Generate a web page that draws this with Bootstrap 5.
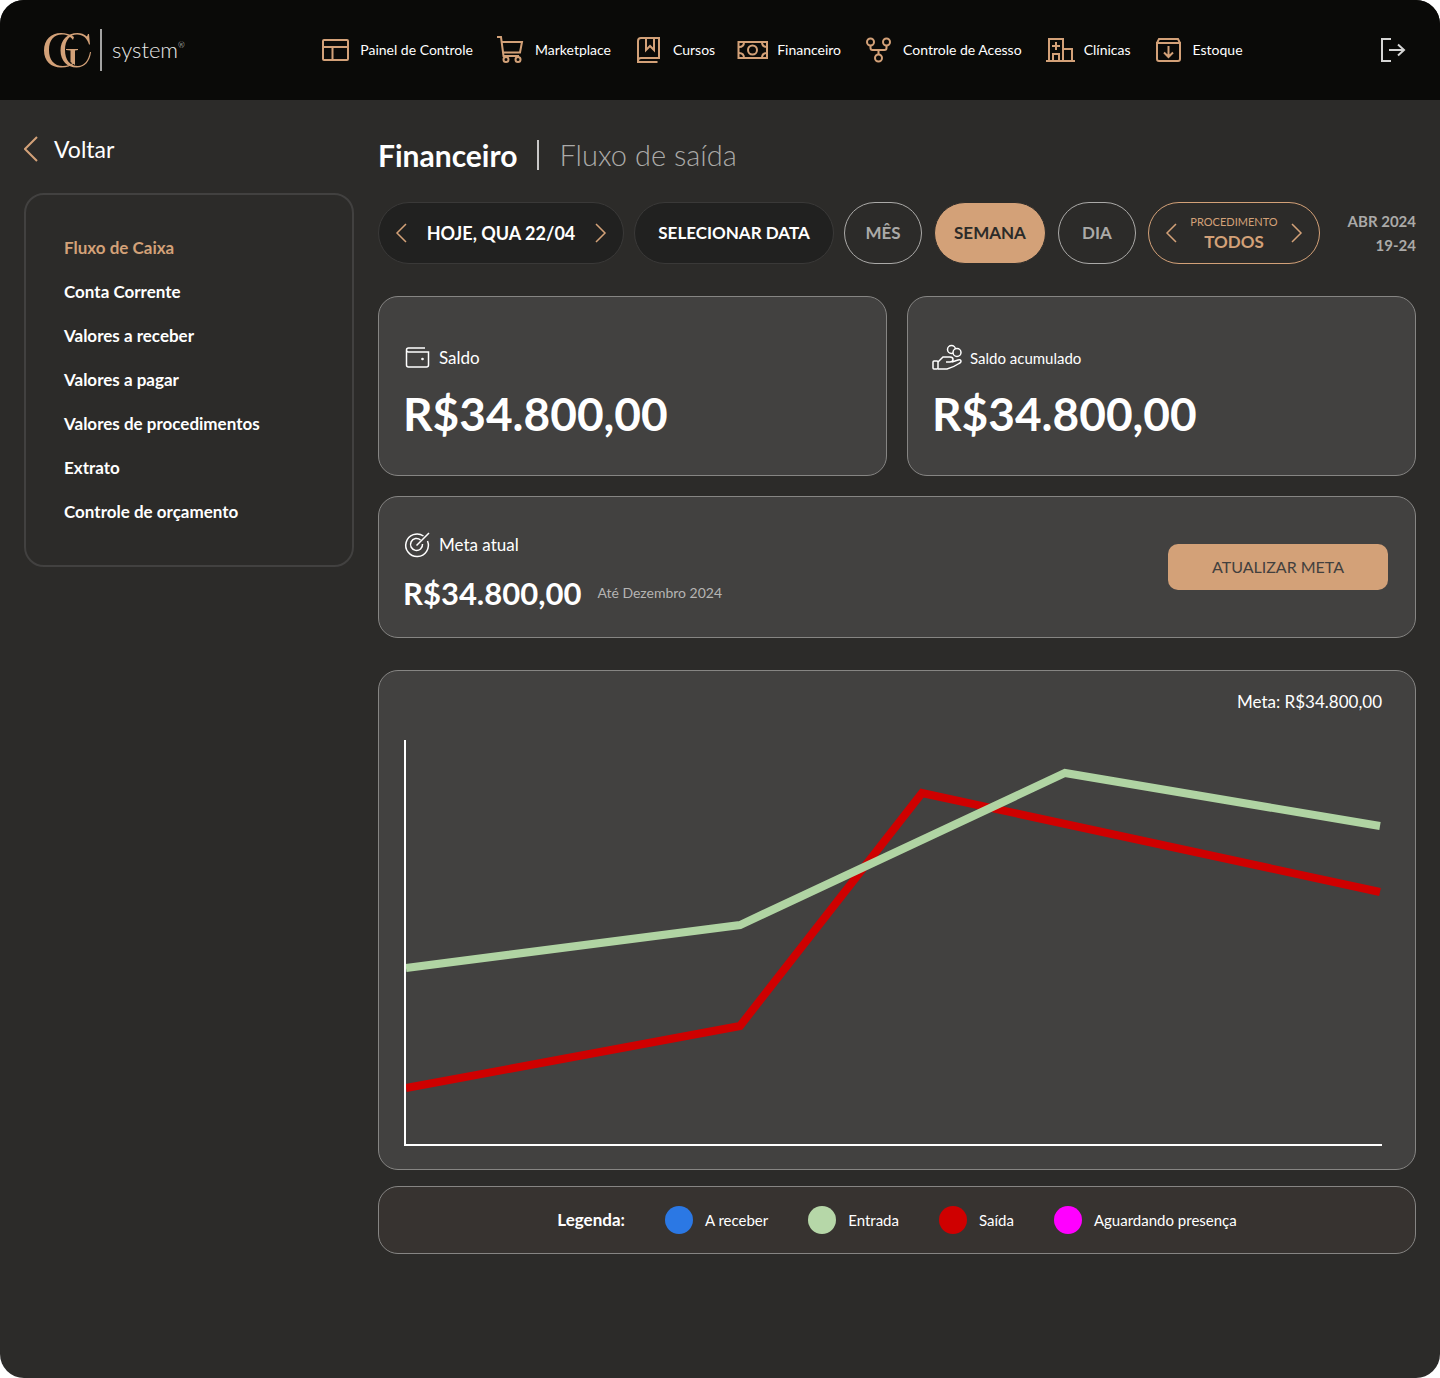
<!DOCTYPE html>
<html lang="pt-BR">
<head>
<meta charset="utf-8">
<meta name="viewport" content="width=device-width, initial-scale=1">
<title>GC system – Fluxo de saída</title>
<link href="https://cdn.jsdelivr.net/npm/bootstrap@5.3.0/dist/css/bootstrap.min.css" rel="stylesheet">
<style>
:root{--gold:#d3a178;--ink:#2c2b29;--panel:#424140;--line:#868583;--muted:#abaaa8}
body{font-family:Lato,"Liberation Sans",sans-serif;background:#fff;color:#fff;line-height:24px}
a{text-decoration:none;color:inherit}
svg{display:block;flex:none}
.app-shell{background:var(--ink);border-radius:24px;overflow:hidden;min-height:100vh}
.top-bar{background:#0a0a08;min-height:100px;padding:0 34px 0 42px}
.brand-name{font-size:22px;font-weight:300;color:#e8e8e7}
.brand-name sup{font-size:8px;top:-10px}
.brand-rule{width:2px;height:42px;background:#a3a3a2;margin:0 10px 0 8px}
.main-nav{gap:4px 22px;font-size:14px}
.gold{color:var(--gold)}
.ico{fill:none;stroke:currentColor;stroke-width:2}
.ico-thin{stroke-width:1.5}
.exit-link{color:#d5d5d4}
.page-body{padding:24px;gap:24px}
.side-col{flex:0 0 330px}
.back-link{font-size:23px;line-height:50px;gap:16px}
.side-menu{border:2px solid var(--panel);border-radius:20px;padding:31px 38px;margin-top:19px}
.side-menu a{display:block;font-size:17px;font-weight:700;line-height:44px}
.side-menu a.active{color:var(--gold)}
.content-col{flex:1 1 0;min-width:0}
.page-title{font-size:30px;line-height:62px;gap:20px}
.page-title h1{font-size:inherit;line-height:inherit;font-weight:700;margin:0}
.page-title .rule{width:2px;height:30px;background:#c9c8c7}
.page-title .sub{font-size:29px;font-weight:300;color:var(--muted)}
.filters{gap:12px;margin-top:16px}
.filters-main{gap:10px}
.pill{height:62px;border-radius:31px;border:1px solid var(--muted);background:transparent;color:var(--muted);font-size:17px;font-weight:700;padding:0 20px}
.pill-dark{background:#212120;border-color:#3a3938;color:#fff}
.pill-on{background:var(--gold);border-color:var(--ink);color:var(--ink)}
.pill-gold{border-color:var(--gold);color:var(--gold)}
.w-date{width:246px;font-size:18px}.w-pick{width:200px}.w-short{width:78px}.w-week{width:112px}.w-proc{width:172px}
.step{background:none;border:0;padding:0;color:var(--gold)}
.proc-label{font-size:11px;line-height:18px;font-weight:400}
.proc-value{line-height:22px}
.period{font-size:15px;font-weight:700;color:var(--muted)}
.panel{background:var(--panel);border:1px solid var(--line);border-radius:20px}
.saldo{min-height:180px;padding:47px 24px 24px}
.saldo-grid{gap:20px;margin-top:32px}
.label-lg{font-size:17px}
.label-md{font-size:15px}
.amount{font-size:46px;line-height:56px;font-weight:700;margin-top:14px}
.goal{margin-top:20px;min-height:142px;padding:0 27px 0 24px}
.goal-info{padding-top:10px}
.goal-row{margin-top:14px}
.goal-amount{font-size:31px;line-height:40px;font-weight:700}
.goal-date{font-size:14px;color:#b5b4b3}
.btn-goal{width:220px;height:46px;border:0;border-radius:10px;background:var(--gold);color:#42403e;font-size:16px}
.chart-box{margin-top:32px;padding:19px 33px 23px 25px}
.chart-box svg{width:100%;height:auto;margin-top:26px}
.legend-bar{margin-top:16px;min-height:68px;background:#373330;gap:8px 40px;font-size:15px}
.legend-item{gap:12px}
.dot{width:28px;height:28px;border-radius:50%}
.c-blue{background:#2b78e4}.c-green{background:#b6d7a8}.c-red{background:#cf0000}.c-pink{background:#f0f}
</style>
</head>
<body>
<div class="app-shell">
<header class="top-bar d-flex align-items-center justify-content-between">
  <a href="#" class="d-flex align-items-center" aria-label="GC system">
    <svg width="50" height="42" viewBox="0 0 50 42" fill="#d3a178">
      <path d="M32 8C28 5 24 4 19 4C9 4 2 11 2 21.500C2 32 9 38.500 19 38.500C25 38.500 29 37 32 34.500L31.500 33.500C28 36 25 37 21 37C12 37 7 31 7 21C7 11 12 5.500 20 5.500C25 5.500 28 7 31 11Z"/>
      <path d="M46 5L45 7.500C42 5 39 4 35.500 4C25.500 4 18.500 11 18.500 21.500C18.500 32 25.500 38.500 34.500 38.500C43 38.500 48 32 49 23H48C46.500 31.500 42 37 36 37C28 37 23 31 23 21C23 11 28 5.500 35 5.500C41 5.500 45 9 47 15.500H48L47 5Z"/>
      <path d="M24 20H36V21L33 21.500V36L28.500 33V21.500L24 21Z"/>
    </svg>
    <span class="brand-rule"></span>
    <span class="brand-name">system<sup>®</sup></span>
  </a>
  <nav class="main-nav d-flex flex-wrap justify-content-center" aria-label="Principal">
    <a href="#" class="d-flex align-items-center gap-2"><svg class="ico gold" width="32" height="32" viewBox="0 0 32 32"><rect x="3" y="6" width="25" height="20" rx="1"/><path d="M3 13h25M12.500 13v13"/></svg>Painel de Controle</a>
    <a href="#" class="d-flex align-items-center gap-2"><svg class="ico gold" width="32" height="32" viewBox="0 0 32 32"><path d="M2 3h4l2.500 19H24M7 8h20l-2 10.500H8.500"/><circle cx="11" cy="25.500" r="2.500"/><circle cx="23" cy="25.500" r="2.500"/></svg>Marketplace</a>
    <a href="#" class="d-flex align-items-center gap-2"><svg class="ico gold" width="32" height="32" viewBox="0 0 32 32"><path d="M24.500 28H5V7q0-3 3-3h18v20H8q-3 0-3 3M13 4v12l4-4 4 4V4"/></svg>Cursos</a>
    <a href="#" class="d-flex align-items-center gap-2"><svg class="ico gold" width="32" height="32" viewBox="0 0 32 32"><rect x="1.500" y="8" width="28.500" height="16"/><circle cx="15.500" cy="16" r="4.500"/><path d="M2 13q5 0 5-5M2 19q5 0 5 5M30 13q-5 0-5-5M30 19q-5 0-5 5"/></svg>Financeiro</a>
    <a href="#" class="d-flex align-items-center gap-2"><svg class="ico gold" width="32" height="32" viewBox="0 0 32 32"><circle cx="7.500" cy="8" r="3.500"/><circle cx="23.500" cy="8" r="3.500"/><circle cx="15.500" cy="24" r="3.500"/><path d="M7.500 11.500V14q0 2 2 2h12q2 0 2-2v-2.500M15.500 16v4.500"/></svg>Controle de Acesso</a>
    <a href="#" class="d-flex align-items-center gap-2"><svg class="ico gold" width="32" height="32" viewBox="0 0 32 32"><path d="M2 27h29M5 27V5h14v22M19 15h9v12M9 27v-7h6v7M12 8v8M8 12h8"/></svg>Clínicas</a>
    <a href="#" class="d-flex align-items-center gap-2"><svg class="ico gold" width="32" height="32" viewBox="0 0 32 32"><path d="M4 9h23v16q0 2-2 2H6q-2 0-2-2ZM4 9l2-4h19l2 4M15.500 12v11M11 18.500l4.500 4.500 4.500-4.500"/></svg>Estoque</a>
  </nav>
  <a href="#" class="exit-link" aria-label="Sair"><svg class="ico" width="28" height="28" viewBox="0 0 28 28"><path d="M13 3H4v22h9M11 14h15M20 8.500l6 5.500-6 5.500"/></svg></a>
</header>

<div class="page-body d-flex">
  <aside class="side-col">
    <a href="#" class="back-link d-flex align-items-center"><svg class="ico gold" width="14" height="26" viewBox="0 0 14 26"><path d="M13 1L1 13l12 12"/></svg>Voltar</a>
    <nav class="side-menu" aria-label="Financeiro">
      <a href="#" class="active" aria-current="page">Fluxo de Caixa</a>
      <a href="#">Conta Corrente</a>
      <a href="#">Valores a receber</a>
      <a href="#">Valores a pagar</a>
      <a href="#">Valores de procedimentos</a>
      <a href="#">Extrato</a>
      <a href="#">Controle de orçamento</a>
    </nav>
  </aside>

  <main class="content-col">
    <div class="page-title d-flex align-items-center"><h1>Financeiro</h1><span class="rule"></span><span class="sub">Fluxo de saída</span></div>

    <div class="filters d-flex align-items-center">
      <div class="filters-main d-flex">
        <div class="pill pill-dark w-date d-flex align-items-center justify-content-between px-3">
          <button class="step" aria-label="Dia anterior"><svg class="ico ico-thin" width="12" height="20" viewBox="0 0 12 20"><path d="M11 1L2 10l9 9"/></svg></button>
          <span>HOJE, QUA 22/04</span>
          <button class="step" aria-label="Próximo dia"><svg class="ico ico-thin" width="12" height="20" viewBox="0 0 12 20"><path d="M1 1l9 9-9 9"/></svg></button>
        </div>
        <button class="pill pill-dark w-pick">SELECIONAR DATA</button>
        <button class="pill w-short">MÊS</button>
      </div>
      <button class="pill pill-on w-week px-0">SEMANA</button>
      <button class="pill w-short">DIA</button>
      <div class="pill pill-gold w-proc d-flex align-items-center justify-content-between px-3">
        <button class="step" aria-label="Procedimento anterior"><svg class="ico ico-thin" width="12" height="20" viewBox="0 0 12 20"><path d="M11 1L2 10l9 9"/></svg></button>
        <span class="text-center"><span class="proc-label d-block">PROCEDIMENTO</span><span class="proc-value d-block">TODOS</span></span>
        <button class="step" aria-label="Próximo procedimento"><svg class="ico ico-thin" width="12" height="20" viewBox="0 0 12 20"><path d="M1 1l9 9-9 9"/></svg></button>
      </div>
      <div class="period ms-auto text-end">ABR 2024<br>19-24</div>
    </div>

    <div class="saldo-grid d-flex">
      <section class="panel saldo flex-fill">
        <div class="label-lg d-flex align-items-center gap-2"><svg class="ico ico-thin" width="28" height="28" viewBox="0 0 28 28"><path d="M22 4H5.500q-2 0-2 2v15q0 2 2 2h18q2 0 2-2V8h-20q-2 0-2-2"/><circle cx="19.500" cy="15" r=".6"/></svg>Saldo</div>
        <div class="amount">R$34.800,00</div>
      </section>
      <section class="panel saldo flex-fill">
        <div class="label-md d-flex align-items-center gap-2"><svg class="ico ico-thin" width="30" height="28" viewBox="0 0 30 28"><circle cx="19.500" cy="5.500" r="4"/><circle cx="25" cy="8.500" r="4" fill="#424140"/><rect x="1" y="17" width="5" height="8" rx="1"/><path d="M6 18l5-5h7q3 0 3 2.500T18 18h-4M20 18l6-2q3-1 3 1.500 0 1-2 2-6 4-12 5.500H6"/></svg>Saldo acumulado</div>
        <div class="amount">R$34.800,00</div>
      </section>
    </div>

    <section class="panel goal d-flex align-items-center justify-content-between">
      <div class="goal-info">
        <div class="label-lg d-flex align-items-center gap-2"><svg class="ico ico-thin" width="28" height="28" viewBox="0 0 28 28"><path d="M20.500 5A11.300 11.300 0 1 0 24.500 10"/><path d="M17.500 9A6 6 0 1 0 19.500 13M13.500 14.500L26 2"/></svg>Meta atual</div>
        <div class="goal-row d-flex align-items-center gap-3"><span class="goal-amount">R$34.800,00</span><span class="goal-date">Até Dezembro 2024</span></div>
      </div>
      <button class="btn-goal">ATUALIZAR META</button>
    </section>

    <section class="panel chart-box">
      <div class="label-lg text-end">Meta: R$34.800,00</div>
      <svg viewBox="0 0 978 406" fill="none" role="img" aria-label="Entradas e saídas do período">
        <path d="M2 348L336 286L518 53L976 152" stroke="#cf0000" stroke-width="8"/>
        <path d="M2 228L336 185L661 33L976 86" stroke="#b0d4a3" stroke-width="8"/>
        <path d="M1 0V405H978" stroke="#fff" stroke-width="2"/>
      </svg>
    </section>

    <section class="panel legend-bar d-flex flex-wrap align-items-center justify-content-center">
      <strong class="label-lg">Legenda:</strong>
      <span class="legend-item d-flex align-items-center"><i class="dot c-blue"></i>A receber</span>
      <span class="legend-item d-flex align-items-center"><i class="dot c-green"></i>Entrada</span>
      <span class="legend-item d-flex align-items-center"><i class="dot c-red"></i>Saída</span>
      <span class="legend-item d-flex align-items-center"><i class="dot c-pink"></i>Aguardando presença</span>
    </section>
  </main>
</div>
</div>
<script src="https://cdn.jsdelivr.net/npm/bootstrap@5.3.0/dist/js/bootstrap.bundle.min.js"></script>
</body>
</html>
